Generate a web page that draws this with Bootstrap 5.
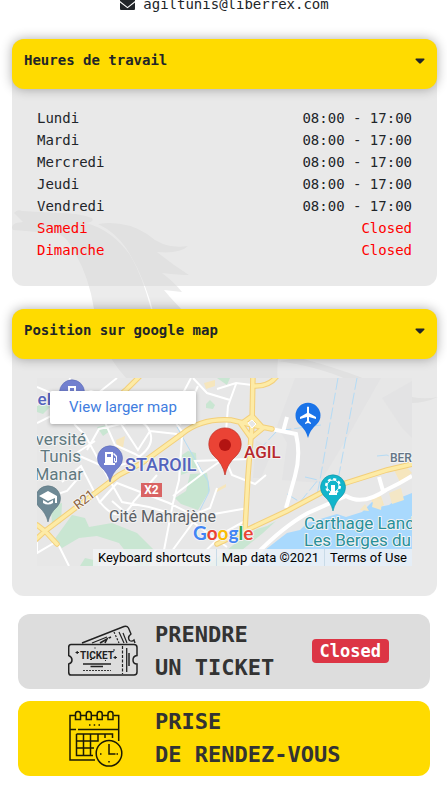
<!DOCTYPE html>
<html lang="fr">
<head>
<meta charset="utf-8">
<meta name="viewport" content="width=device-width, initial-scale=1">
<title>Agil Tunis</title>
<link href="https://cdn.jsdelivr.net/npm/bootstrap@5.3.0/dist/css/bootstrap.min.css" rel="stylesheet">
<style>
body { font-family: "DejaVu Sans Mono", "Liberation Mono", monospace; font-size: 14px; line-height: 22px; color: #212529; background: #fff; overflow-x: hidden; }
.page { padding: 0 10px 22px 12px; margin-top: -7px; }
.watermark { position: absolute; left: 0; top: 0; z-index: -1; }
.contact { color: inherit; margin-bottom: 24px; }
.panel { background: rgba(217,217,217,.58); border-radius: 12px; }
.panel + .panel { margin-top: 23px; }
.panel-toggle { background: #ffdb00; color: #212529; border: 0; border-radius: 12px; height: 50px; padding: 10px 12px; font-weight: 700; box-shadow: 0 0 12px rgba(0,0,0,.32); }
.hours-body { padding: 18px 25px 25px; }
.hours th, .hours td { padding: 0; font-weight: 400; }
.shut { color: #f00; }
.map-body { padding: 19px 25px 30px; }
.map-frame { font-family: Roboto, sans-serif; height: 188px; overflow: hidden; }
.map-larger { position: absolute; left: 13px; top: 13px; background: #fff; color: #3f7de0; font-size: 15px; line-height: 33px; padding: 0 19px; border-radius: 2px; box-shadow: 0 1px 4px rgba(0,0,0,.3); }
.map-foot { position: absolute; right: 0; bottom: 0; font-size: 13px; line-height: 17px; background: rgba(241,243,245,.82); }
.map-foot a { color: #000; padding: 0 5px; white-space: nowrap; }
.map-foot a + a { border-left: 1px solid #c9dbe8; }
.actions { padding: 18px 7px 0 6px; gap: 12px; }
.action { min-height: 75px; border: 0; border-radius: 12px; padding: 4px 41px 5px 50px; gap: 17px; color: #333; font-size: 22px; line-height: 33px; font-weight: 700; text-align: left; }
.action-off { background: #ddd; }
.action-on { background: #ffdb00; }
.action svg { flex: none; }
.state { font-size: 17px; line-height: 24px; padding: 0 8px; border-radius: 4px; background: #dc3545; color: #fff; }
</style>
</head>
<body>
<svg class="watermark" width="440" height="420" viewBox="0 0 440 420" fill="#ececec" aria-hidden="true">
  <path d="M14 213Q17 209 22 211L60 213Q78 213 92 218Q95 222 86 223Q112 230 130 255Q142 275 151 309L170 359L278 359Q276 380 280 398Q175 420 135 387Q100 355 94 309Q88 270 67 240Q52 226 38 232L13 230Q10 226 16 223L23 222Z"/>
  <path d="M98 224Q125 220 147 234Q165 250 188 246Q180 254 157 252Q173 265 189 275Q180 275 162 273Q174 282 182 292L164 290Q172 300 190 318H155Q144 275 126 248Q115 232 98 224Z"/>
  <path d="M278 361Q340 370 375 395Q410 410 438 397Q418 401 400 393Q350 371 300 358Z"/>
</svg>
<main class="page">
  <a class="contact d-flex justify-content-center align-items-center text-decoration-none" href="mailto:agiltunis@liberrex.com">
    <svg class="me-2" width="15" height="15" viewBox="0 0 15 15" aria-hidden="true"><path fill="#212529" d="M1 1H14Q15 1 15 2V4L7.500 10L0 4V2Q0 1 1 1Z"/><path fill="#212529" d="M0 5.500L7.500 11.300L15 5.500V12Q15 13 14 13H1Q0 13 0 12Z"/></svg>
    <span>agiltunis@liberrex.com</span>
  </a>

  <section class="panel">
    <button class="panel-toggle w-100 d-flex justify-content-between align-items-start" type="button" data-bs-toggle="collapse" data-bs-target="#hours" aria-expanded="true" aria-controls="hours">
      <span>Heures de travail</span>
      <svg width="10" height="22" viewBox="0 0 10 22" aria-hidden="true"><path fill="#212529" d="M1 9.500H9Q10 10 9.300 10.800L5.800 14.300Q5 15 4.200 14.300L.7 10.800Q0 10 1 9.500Z"/></svg>
    </button>
    <div class="collapse show" id="hours">
      <div class="hours-body">
        <table class="hours w-100">
          <tbody>
            <tr><th scope="row">Lundi</th><td class="text-end">08:00 - 17:00</td></tr>
            <tr><th scope="row">Mardi</th><td class="text-end">08:00 - 17:00</td></tr>
            <tr><th scope="row">Mercredi</th><td class="text-end">08:00 - 17:00</td></tr>
            <tr><th scope="row">Jeudi</th><td class="text-end">08:00 - 17:00</td></tr>
            <tr><th scope="row">Vendredi</th><td class="text-end">08:00 - 17:00</td></tr>
            <tr class="shut"><th scope="row">Samedi</th><td class="text-end">Closed</td></tr>
            <tr class="shut"><th scope="row">Dimanche</th><td class="text-end">Closed</td></tr>
          </tbody>
        </table>
      </div>
    </div>
  </section>

  <section class="panel">
    <button class="panel-toggle w-100 d-flex justify-content-between align-items-start" type="button" data-bs-toggle="collapse" data-bs-target="#place" aria-expanded="true" aria-controls="place">
      <span>Position sur google map</span>
      <svg width="10" height="22" viewBox="0 0 10 22" aria-hidden="true"><path fill="#212529" d="M1 9.500H9Q10 10 9.300 10.800L5.800 14.300Q5 15 4.200 14.300L.7 10.800Q0 10 1 9.500Z"/></svg>
    </button>
    <div class="collapse show" id="place">
      <div class="map-body">
        <div class="map-frame position-relative">
          <svg class="d-block w-100 h-100" viewBox="0 0 375 188" preserveAspectRatio="xMidYMid slice" role="img" aria-label="Carte: AGIL, Tunis">
            <rect width="375" height="188" fill="#e7e7e7"/>
            <path fill="#e3e3e4" d="M258 0H344L310 60L283 105L245 102L250 65L240 48ZM219 62L236 72L224 100H216ZM345 20L375 3V60L365 50Z"/>
            <g fill="#c9e6d2">
              <path d="M17 162L35 137L48 140L52 149L75 145L100 155L117 172L112 188H100L82 165L60 158L42 160L25 170Z"/>
              <path d="M138 120L149 113L153 96L170 95L173 112L161 132L144 126ZM14 128L25 125L24 145L15 148Z"/>
              <path d="M60 49L70 47L73 53L66 58ZM169 26L173 22L178 27L176 31L169 30ZM145 77L151 73L159 75L160 91L144 97ZM43 188L48 180L61 183V188ZM180 0H193L190 7Z"/>
              <path d="M205 160L220 151L230 148L239 143L226 155L205 172L188 188H170Z"/>
              <path d="M0 28L8 25L13 29L6 36L0 34Z"/>
            </g>
            <path fill="#f6e6bd" d="M167 5L178 2V8L169 11ZM79 62L88 58L86 70L80 71ZM178 112L189 106V109L178 115ZM357 92L367 86L375 95L363 104ZM334 120L344 118L347 127L337 131Z"/>
            <path fill="#a9d9fd" d="M375 115L360 121L352 127L342 129L335 124L325 134L309 139L300 136L270 145L263 152L250 155L228 172L210 188H375Z"/>
            <path fill="#f4e7c6" d="M337 119L345 122L344 132L335 129ZM352 115L364 110L367 122L355 126ZM323 132L328 126L332 133Z"/>
            <g fill="none" stroke="#b4dbf5" stroke-width="1">
              <path stroke-dasharray="12 3" d="M301 0L283 102L280 117M320 0L301 102M284 47L240 53L222 72M268 99L281 102L263 124L250 116M340 78L350 77L365 85"/>
              <path d="M140 49Q158 82 171 103L172 114L163 132"/>
            </g>
            <g fill="none" stroke="#fff" stroke-width="2">
              <path d="M0 9L30 22L54 13L90 25L136 40M0 45L30 30L55 20L80 0M33 0Q28 30 38 47L48 57L73 103L85 124L112 129L150 140L190 169M67 42L78 67L98 76L112 85M50 72L62 51L84 46L101 72L113 53L140 56M86 46Q107 38 113 54T94 84L66 92M58 63L38 76L70 90M145 58L142 102L136 125L124 188M136 118L165 96L158 83L211 81M165 96L188 80L195 97L218 106L229 97M154 0L134 38L146 55M156 0L170 15L193 22M161 8L143 47M188 66L191 28L199 6M180 11L199 5L215 7M211 130L160 139L135 173M25 104L44 88L62 123Q83 150 97 123L120 97M0 123L30 113L44 97M0 149L20 164L32 188M62 125L80 105L132 125L156 137L173 130L180 110M153 188L188 154L208 143M0 160L0 175L17 165M97 142L75 123"/>
              <path stroke-width="4" d="M200 44L259 56Q264 77 258 98L249 130M246 54L250 39M208 188Q243 150 271 135L309 118Q326 128 349 112Q362 106 375 98M342 99L346 113"/>
            </g>
            <g fill="none" stroke-linecap="round">
              <path stroke="#f3cf7a" stroke-width="5.500" d="M-5 165L8 153L82 97L105 85L145 56Q164 40 194 42L215 47L235 51M216 -5L215 47L211 98L208 152M103 -2L90 11L70 28M180 166L216 149L250 133L293 110L350 92L380 85M216 8Q232 9 240 -2M0 147L9 154L20 166M204 46L215 38L226 50L214 60Z"/>
              <path stroke="#fdeba6" stroke-width="3.500" d="M-5 165L8 153L82 97L105 85L145 56Q164 40 194 42L215 47L235 51M216 -5L215 47L211 98L208 152M103 -2L90 11L70 28M180 166L216 149L250 133L293 110L350 92L380 85M216 8Q232 9 240 -2M0 147L9 154L20 166M204 46L215 38L226 50L214 60Z"/>
            </g>
            <path fill="#e7e7e7" stroke="#fff" d="M211 45L215 42L219 46L215 50Z"/>
            <!-- place pins -->
            <g fill="#7280cf" stroke="#5b69b5" stroke-width=".6">
              <path d="M73 104Q71 95 64 89A12.500 12.500 0 1 1 82 89Q75 95 73 104Z"/>
              <path d="M35 38Q33 29 26 23A12.500 12.500 0 1 1 44 23Q37 29 35 38Z"/>
            </g>
            <g fill="#fff"><path fill-rule="evenodd" d="M68 74H76V85H78V87H67V85H68ZM70 76V79H74V76Z"/><path d="M77 75L80 78V84Q78 86 77 83V80H78V83H79V79L76 76Z"/></g>
            <path fill="#fff" fill-rule="evenodd" d="M31 8H39V20H30V19H31ZM33 10V13H37V10Z"/>
            <path fill="#6e8995" stroke="#5c7580" stroke-width=".6" d="M11 144Q9 135 2 129A12.500 12.500 0 1 1 20 129Q13 135 11 144Z"/>
            <path fill="#fff" d="M2 118L11 113L20 118V125H18V120L11 123ZM6 122L11 125L16 122V125Q11 128 6 125Z"/>
            <path fill="#1a73e8" d="M271 60Q269 52 262 46A12.500 12.500 0 1 1 280 46Q273 52 271 60Z"/>
            <path fill="#fff" d="M270 29Q271 28 272 29V35L279 39V41L272 39V43L274 45V46L271 45L268 46V45L270 43V39L263 41V39L270 35Z"/>
            <path fill="#12b5cb" stroke="#0f91a2" stroke-width=".6" d="M296 133Q294 124 287 118A12.500 12.500 0 1 1 305 118Q298 124 296 133Z"/>
            <circle cx="296" cy="108" r="6" fill="none" stroke="#fff" stroke-width="1"/>
            <circle cx="296" cy="108" r="7" fill="none" stroke="#fff" stroke-width="2" stroke-dasharray="3 2.500"/>
            <path fill="#fff" d="M294 107H298V115H300V117H292V115H294Z"/>
            <path fill="#ea4335" stroke="#bd2c23" stroke-width=".7" d="M188 97Q186 86 177 78A16.200 16.200 0 1 1 199 78Q190 86 188 97Z"/>
            <circle cx="188" cy="67" r="6" fill="#b31412"/>
            <rect x="104" y="105" width="21" height="14" fill="#d96464"/>
            <text x="114.500" y="116" text-anchor="middle" font-size="12" font-weight="700" fill="#fff">X2</text>
            <g paint-order="stroke" stroke="#f3f3f3" stroke-width="2" stroke-linejoin="round">
              <g fill="#60797f" font-size="17" text-anchor="end">
                <text x="49" y="67">versité</text><text x="44" y="84">Tunis</text><text x="46" y="102">Manar</text>
              </g>
              <g fill="#5363bd" font-weight="500"><text x="14" y="27" font-size="17" text-anchor="end">nel</text><text x="88" y="93" font-size="18">STAROIL</text></g>
              <text x="207" y="80" font-size="17" font-weight="500" fill="#b8282c">AGIL</text>
              <text x="72" y="144" font-size="16" fill="#5b6065">Cité Mahrajène</text>
              <text x="353" y="84" font-size="12" font-weight="500" fill="#647586">BERG</text>
              <g fill="#28909b" font-size="17"><text x="267" y="151">Carthage Land</text><text x="267" y="168">Les Berges du</text></g>
              <text transform="translate(41 132) rotate(-38)" font-size="13" fill="#8b6037">R21</text>
              <text x="156" y="162" font-family="Lato, sans-serif" font-weight="700" font-size="19" fill="#4285f4">G<tspan fill="#ea4335">o</tspan><tspan fill="#fbbc04">o</tspan>g<tspan fill="#34a853">l</tspan><tspan fill="#ea4335">e</tspan></text>
            </g>
          </svg>
          <a class="map-larger text-decoration-none" href="#place">View larger map</a>
          <div class="map-foot d-flex"><a class="text-decoration-none" href="#place">Keyboard shortcuts</a><a class="text-decoration-none" href="#place">Map data ©2021</a><a class="text-decoration-none" href="#place">Terms of Use</a></div>
        </div>
      </div>
    </div>
  </section>

  <div class="actions d-flex flex-column">
    <button class="action action-off d-flex align-items-center w-100" type="button">
      <svg width="70" height="52" viewBox="0 0 70 52" fill="none" stroke="#222" stroke-width="1.200" aria-hidden="true">
        <path d="M14 18L56 1.500Q59 .5 60.500 3L63 9Q59 12 61.500 15.500Q64 17 66 15L67 18" stroke-width="1.400"/>
        <path d="M46 7L51 18" stroke-dasharray="2 1.500"/>
        <path d="M51 7L56 18M55 8L59 18M24 18L39 12" />
        <path d="M32 18L39 14L37 18M41 13L43 12" stroke-width="1.600"/>
        <path d="M3 19.500H66Q69 19.500 69 22.500V30.500Q65 31 65 35T69 39V47Q69 50 66 50H3Q.7 50 .7 47V39Q4 38 4 35T.7 30.500V22.500Q.7 19.500 3 19.500Z" stroke-width="1.500"/>
        <path d="M54.500 21V49" stroke-dasharray="3 1.500"/>
        <path d="M15 45.500H43" stroke-dasharray="2 1" stroke-width=".9"/>
        <path d="M58.700 23V47" stroke-width="1.300"/><path d="M61 28V41" stroke-width="1.500"/>
        <path d="M15 39H43M22.500 41.500H35" stroke-width="1.700"/>
        <path d="M7.500 27.500H11M9.200 26V29M45.500 32.500H49M47.200 31V34M27 22.500V23.500M45 25H47M37 35.500H38M22 34.500H24" stroke-width="1.200"/>
        <text x="29" y="33.500" text-anchor="middle" font-family="Roboto, sans-serif" font-size="10" font-weight="700" fill="#222" stroke="none">TICKET</text>
      </svg>
      <span>PRENDRE<br>UN TICKET</span>
      <span class="state ms-auto">Closed</span>
    </button>
    <button class="action action-on d-flex align-items-center w-100" type="button">
      <svg width="70" height="58" viewBox="0 0 70 58" fill="none" stroke="#1b1a05" stroke-width="1.500" aria-hidden="true">
        <path d="M7.500 6.500H2V51H27M12.500 6.500H18M23.500 6.500H29M34.500 6.500H40M45.500 6.500H50.700V32M2 20.500H8M10 20.500H50.700"/>
        <path d="M7.500 10.500V5Q7.500 2.500 10 2.500T12.500 5V10.500ZM18.300 10.500V5Q18.300 2.500 20.800 2.500T23.300 5V10.500ZM29.200 10.500V5Q29.200 2.500 31.700 2.500T34.200 5V10.500ZM40 10.500V5Q40 2.500 42.500 2.500T45 5V10.500Z"/>
        <path d="M8.500 25H44.500V29M8.500 25V46.500H25M15.500 25V46.500M22.500 25V46.500M30 25V32H8.500M37 25V29M8.500 39H26"/>
        <path d="M21 16H22.500M25.700 16H27.200M30.500 16H32"/>
        <circle cx="41" cy="44.300" r="12.800"/>
        <path d="M41 35V45H47.500M41 52V53.500M32 45H33.500M48.500 45H50"/>
      </svg>
      <span>PRISE<br>DE RENDEZ-VOUS</span>
    </button>
  </div>
</main>
<script src="https://cdn.jsdelivr.net/npm/bootstrap@5.3.0/dist/js/bootstrap.bundle.min.js"></script>
</body>
</html>
